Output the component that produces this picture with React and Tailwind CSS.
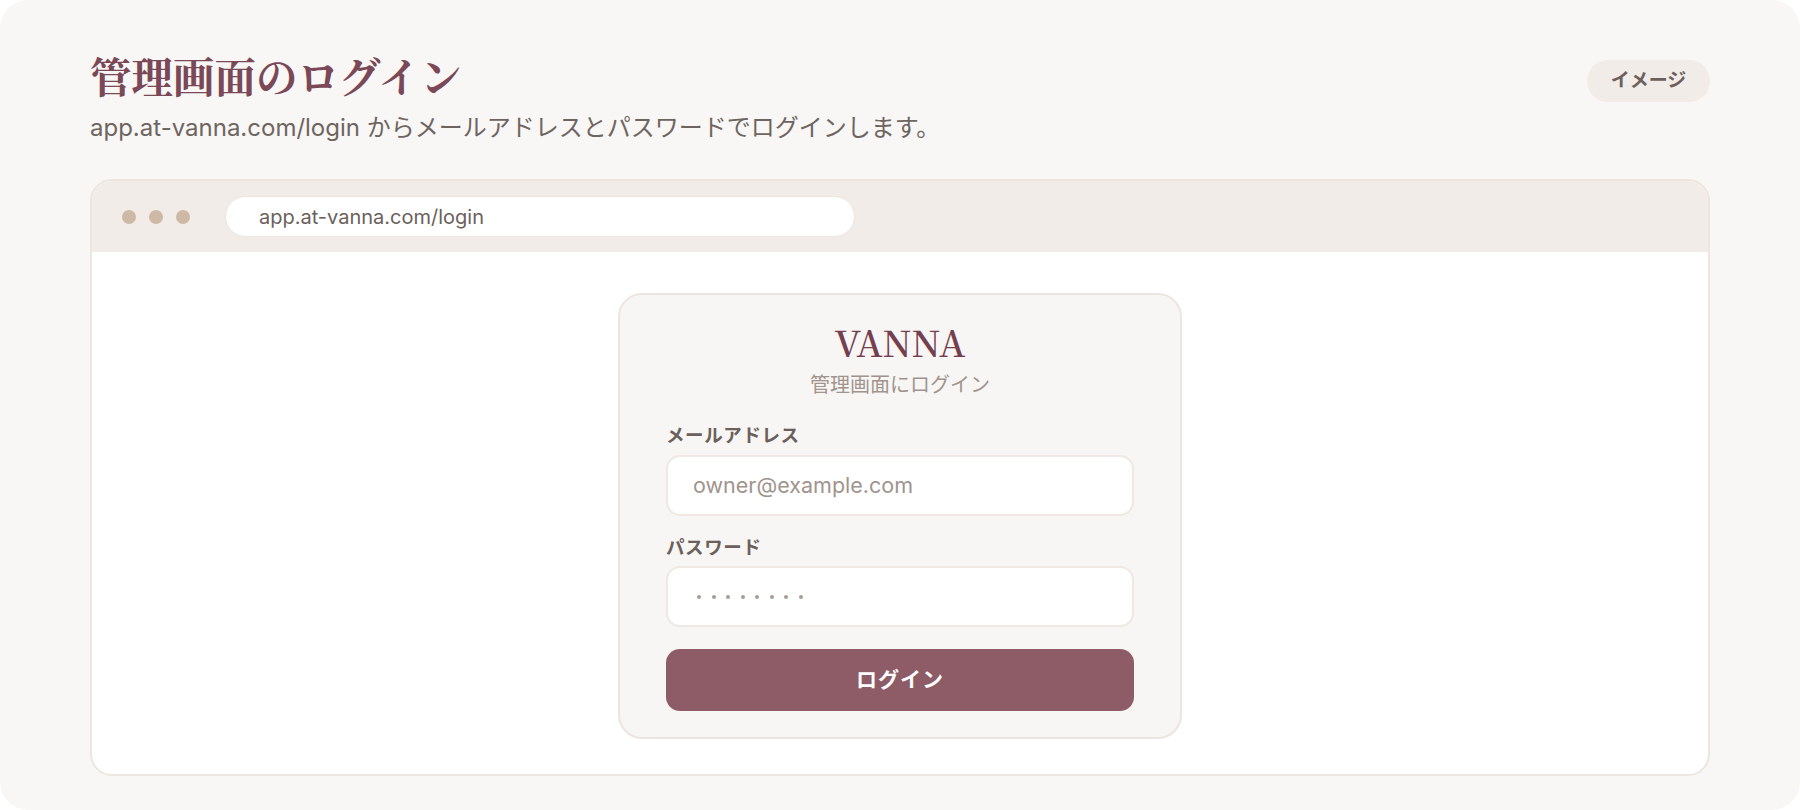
export default function App() {
  const sans = "font-['Inter','Noto_Sans_CJK_JP',sans-serif]";
  return (
    <div className={`min-h-[810px] w-full bg-white ${sans}`}>
      <div className="flex h-[810px] flex-col rounded-[28px] bg-[#f8f7f5] px-[90px] pt-[50px]">
        {/* page heading */}
        <header className="flex items-start justify-between">
          <div>
            <h1 className="font-['Noto_Serif_CJK_JP','Liberation_Serif','Noto_Sans_CJK_JP',serif] text-[41.5px] font-bold leading-[50px] text-[#7a4857]">
              管理画面のログイン
            </h1>
            <p className="mt-[14px] text-[24px] leading-[28px] text-[#6e6460]">
              app.at-vanna.com/login からメールアドレスとパスワードでログインします。
            </p>
          </div>
          <span className="mt-[10px] flex h-[42px] w-[123px] items-center justify-center rounded-full bg-[#f1ece8] text-[19px] font-bold text-[#6b605b]">
            イメージ
          </span>
        </header>

        {/* browser mock */}
        <div className="mt-[37px] flex h-[597px] flex-col overflow-hidden rounded-[22px] border-2 border-[#ece5e0] bg-white">
          <div className="flex h-[71px] items-center bg-[#f2ece8] pl-[30px]">
            <div className="flex gap-[13px]">
              <span className="h-[14px] w-[14px] rounded-full bg-[#cdb9a5]" />
              <span className="h-[14px] w-[14px] rounded-full bg-[#cdb9a5]" />
              <span className="h-[14px] w-[14px] rounded-full bg-[#cdb9a5]" />
            </div>
            <div className="ml-[35px] flex h-[41px] w-[630px] items-center rounded-full border border-[#ece4de] bg-white pl-[33px] text-[20px] text-[#6b605b]">
              app.at-vanna.com/login
            </div>
          </div>

          <div className="flex flex-1 justify-center pt-[41px]">
            {/* login card */}
            <div className="flex w-[564px] flex-col self-start rounded-[24px] border-2 border-[#ede5df] bg-[#f8f6f4] px-[46px] pb-[26px] pt-[25px]">
              <div className="text-center font-['Noto_Serif_CJK_JP','Liberation_Serif',serif] text-[36px] font-semibold leading-[44px] text-[#74404f]">
                VANNA
              </div>
              <div className="mt-[7px] text-center text-[20px] leading-[28px] text-[#a0948d]">
                管理画面にログイン
              </div>

              <label className="mt-[23px] text-[18.5px] font-bold leading-[26px] tracking-[0.6px] text-[#6b605b]">
                メールアドレス
              </label>
              <div className="mt-[7px] flex h-[61px] items-center rounded-[14px] border-2 border-[#efe8e3] bg-white pl-[25px] text-[21.5px] text-[#a0948d]">
                owner@example.com
              </div>

              <label className="mt-[18px] text-[18.5px] font-bold leading-[26px] tracking-[0.6px] text-[#6b605b]">
                パスワード
              </label>
              <div className="mt-[6px] flex h-[61px] items-center rounded-[14px] border-2 border-[#efe8e3] bg-white pl-[29px]">
                <div className="flex gap-[10.5px]">
                  {Array.from({ length: 8 }).map((_, i) => (
                    <span key={i} className="h-[4px] w-[4px] rounded-full bg-[#a89c95]" />
                  ))}
                </div>
              </div>

              <button className="mt-[22px] flex h-[62px] items-center justify-center rounded-[14px] bg-[#8e5c67] text-[21px] font-bold tracking-[1px] text-white">
                ログイン
              </button>
            </div>
          </div>
        </div>
      </div>
    </div>
  );
}
